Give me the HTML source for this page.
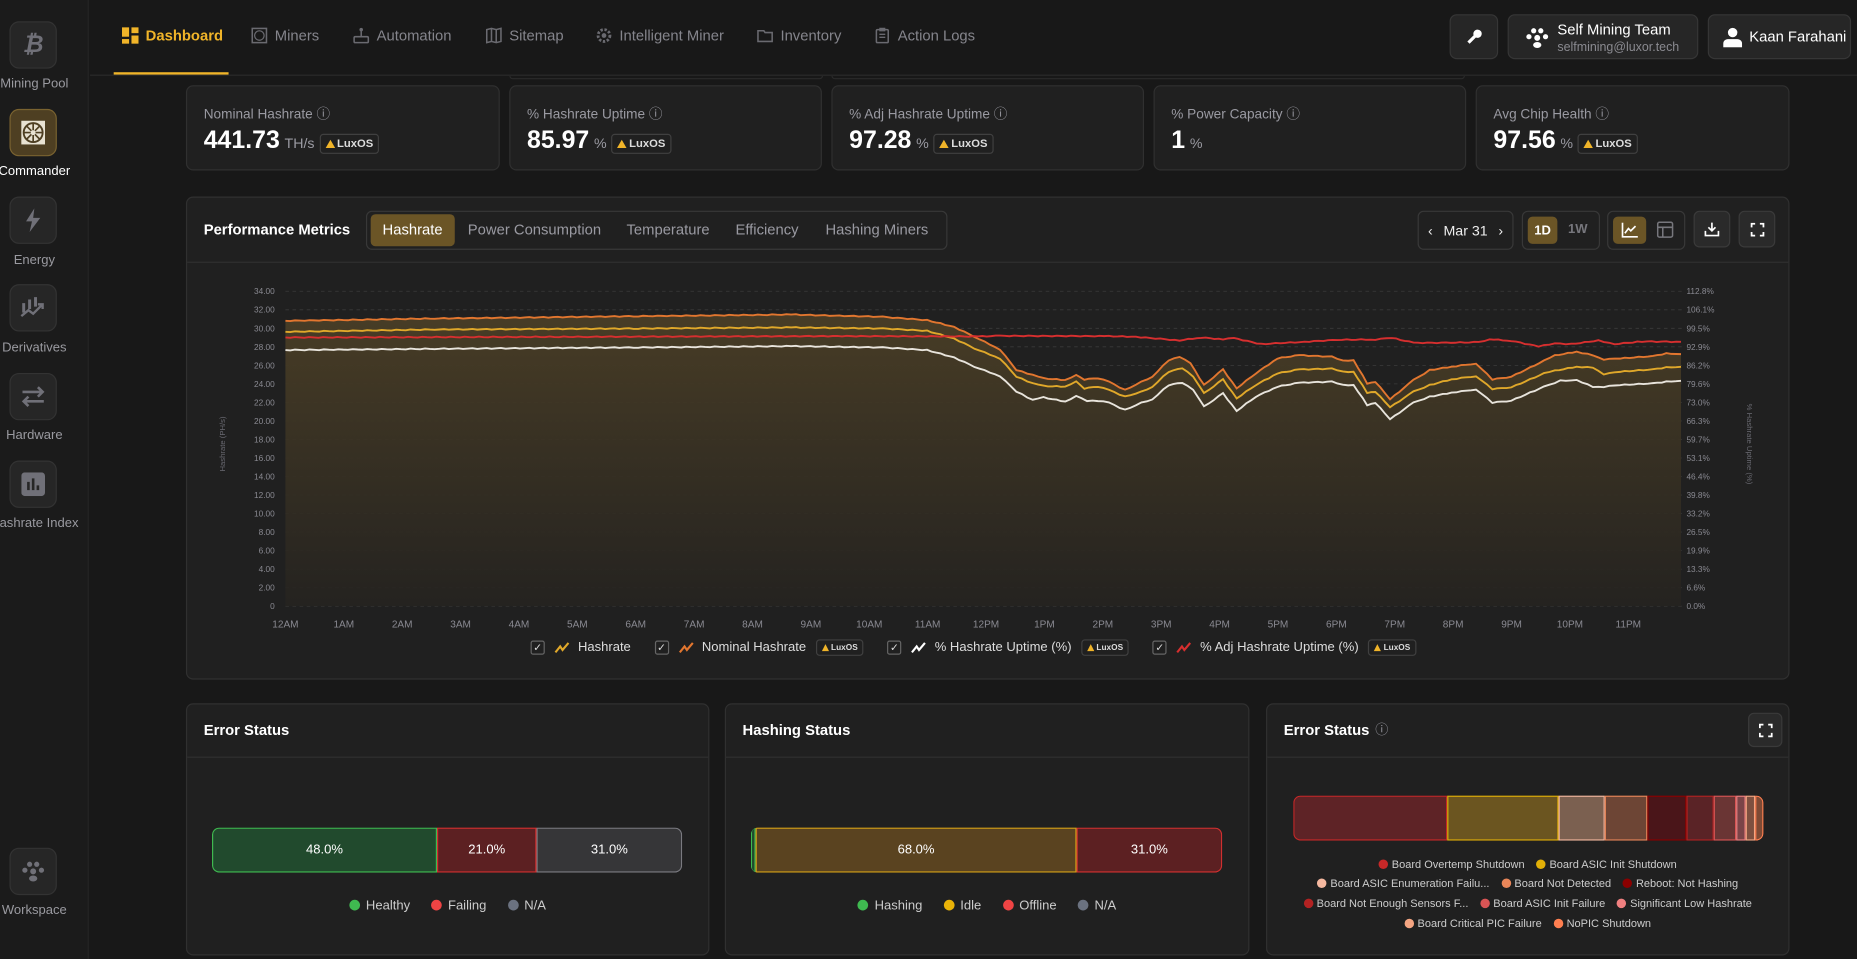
<!DOCTYPE html>
<html><head><meta charset="utf-8">
<style>
*{box-sizing:border-box;margin:0;padding:0}
html,body{width:1857px;height:959px;overflow:hidden;background:#181818;font-family:"Liberation Sans",sans-serif;color:#fff}
#root{width:1568px;height:810px;transform:scale(1.18431,1.18395);transform-origin:0 0;position:relative;background:#181818}
.abs{position:absolute}
.side{left:0;top:0;width:75px;height:810px;background:#1b1b1b;border-right:1px solid #252525}
.sbox{position:absolute;left:8px;width:40px;height:40px;border-radius:8px;background:#262626;border:1px solid #333;display:flex;align-items:center;justify-content:center}
.slabel{position:absolute;width:90px;left:-16px;text-align:center;font-size:11px;color:#9a9aa0}
.top{left:76px;top:0;width:1492px;height:64px;border-bottom:1px solid #2a2a2a}
.nav{position:absolute;top:23px;font-size:12.5px;color:#85858c;display:flex;align-items:center;gap:6px}
.btn{position:absolute;background:#262626;border:1px solid #363636;border-radius:6px}
.card{position:absolute;background:#202020;border:1px solid #303030;border-radius:6px}
.kt{position:absolute;left:14px;top:15px;font-size:11.5px;color:#9a9aa2}
.kv{position:absolute;left:14px;top:34px;font-size:21px;font-weight:bold;color:#fff;display:flex;align-items:baseline;gap:4px}
.kv small{font-size:12px;font-weight:normal;color:#9a9aa2}
.lux{display:inline-flex;align-items:center;gap:2px;border:1px solid #404040;border-radius:3px;padding:1px 4px;font-size:9.5px;font-weight:bold;color:#ddd;height:17px;vertical-align:middle}
.lux i{display:inline-block;width:0;height:0;border-left:4px solid transparent;border-right:4px solid transparent;border-bottom:7px solid #f0b429}
.ct{position:absolute;left:14px;top:15px;font-size:12.5px;font-weight:bold;color:#fff;line-height:15px}
.hdr{position:absolute;left:0;right:0;top:44px;border-top:1px solid #303030}
.dot{display:inline-block;width:9px;height:9px;border-radius:50%;margin-right:5px;vertical-align:-1px}
.leg{position:absolute;font-size:11px;color:#ccc;display:flex;gap:18px;justify-content:center}
.seg{height:100%;display:flex;align-items:center;justify-content:center;font-size:11px;color:#fff}
.bar{position:absolute;display:flex;border-radius:6px;overflow:hidden}
.el{font-size:9.3px;color:#ccc;display:flex;gap:10px;justify-content:center;position:absolute;left:0;right:0}
.el .dot{width:8px;height:8px;margin-right:3px}
</style></head><body><div id="root">

<div class="abs side">
  <div class="sbox" style="top:18px"><span style="font-size:20px;font-weight:bold;color:#707078;font-style:italic">₿</span></div>
  <div class="slabel" style="top:65px">Mining Pool</div>
  <div class="sbox" style="top:92px;background:#4e3f22;border-color:#7a6330"><svg width="24" height="24" viewBox="0 0 24 24"><rect x="2" y="2" width="20" height="20" fill="#e8e2d2"/><circle cx="12" cy="12" r="8" fill="none" stroke="#4e3f22" stroke-width="1.6"/><path d="M12 4v6M12 14v6M4 12h6M14 12h6M6.5 6.5l4 4M13.5 13.5l4 4M17.5 6.5l-4 4M10.5 13.5l-4 4" stroke="#4e3f22" stroke-width="1.4"/></svg></div>
  <div class="slabel" style="top:139px;color:#fff">Commander</div>
  <div class="sbox" style="top:166px"><svg width="16" height="20" viewBox="0 0 16 20"><path d="M9 0L2 11h5l-2 9 9-12H8z" fill="#707078"/></svg></div>
  <div class="slabel" style="top:214px">Energy</div>
  <div class="sbox" style="top:240px"><svg width="22" height="20" viewBox="0 0 22 20"><path d="M3 6v8M8 3v8M13 1v8" stroke="#707078" stroke-width="2.5"/><path d="M1 17l6-5 4 3 7-7" stroke="#707078" stroke-width="2" fill="none"/><path d="M15 7h4v4" stroke="#707078" stroke-width="2" fill="none"/></svg></div>
  <div class="slabel" style="top:288px">Derivatives</div>
  <div class="sbox" style="top:315px"><svg width="22" height="18" viewBox="0 0 22 18"><path d="M2 5h17M15 1l4 4-4 4M20 13H3M7 9l-4 4 4 4" stroke="#707078" stroke-width="2.2" fill="none"/></svg></div>
  <div class="slabel" style="top:362px">Hardware</div>
  <div class="sbox" style="top:389px"><svg width="20" height="20" viewBox="0 0 20 20"><rect width="20" height="20" rx="3" fill="#707078"/><path d="M6 8v7M10 5v10M14 11v4" stroke="#262626" stroke-width="2.2"/></svg></div>
  <div class="slabel" style="top:436px">Hashrate Index</div>
  <div class="sbox" style="top:716px"><svg width="20" height="18" viewBox="0 0 20 18"><circle cx="7" cy="3" r="2.2" fill="#707078"/><circle cx="13" cy="3" r="2.2" fill="#707078"/><circle cx="3" cy="8" r="2.2" fill="#707078"/><circle cx="17" cy="8" r="2.2" fill="#707078"/><circle cx="10" cy="9" r="2.5" fill="#707078"/><ellipse cx="10" cy="15" rx="3.5" ry="2.5" fill="#707078"/></svg></div>
  <div class="slabel" style="top:763px">Workspace</div>
</div>

<div class="abs top"></div>
<div class="nav" style="left:103px;color:#f0b429;font-weight:bold"><svg width="14" height="14" viewBox="0 0 14 14"><rect x="0" y="0" width="6" height="8" fill="#f0b429"/><rect x="8" y="0" width="6" height="5" fill="#f0b429"/><rect x="0" y="10" width="6" height="4" fill="#f0b429"/><rect x="8" y="7" width="6" height="7" fill="#f0b429"/></svg>Dashboard</div>
<div class="abs" style="left:96px;top:61px;width:97px;height:2px;background:#f0b429"></div>
<div class="nav" style="left:212px"><svg width="14" height="14" viewBox="0 0 14 14"><rect x="1" y="1" width="12" height="12" fill="none" stroke="#6a6a70" stroke-width="1.3"/><circle cx="7" cy="7" r="4" fill="none" stroke="#6a6a70"/></svg>Miners</div>
<div class="nav" style="left:298px"><svg width="14" height="14" viewBox="0 0 14 14"><rect x="1" y="8" width="12" height="5" rx="1" fill="none" stroke="#6a6a70" stroke-width="1.3"/><path d="M7 8V2" stroke="#6a6a70" stroke-width="1.3"/><circle cx="7" cy="2" r="1.5" fill="#6a6a70"/></svg>Automation</div>
<div class="nav" style="left:410px"><svg width="14" height="14" viewBox="0 0 14 14"><path d="M1 2l4-1 4 1 4-1v11l-4 1-4-1-4 1z M5 1v11M9 2v11" fill="none" stroke="#6a6a70" stroke-width="1.3"/></svg>Sitemap</div>
<div class="nav" style="left:503px"><svg width="14" height="14" viewBox="0 0 14 14"><circle cx="7" cy="7" r="5" fill="none" stroke="#6a6a70" stroke-width="2.4" stroke-dasharray="2 1.4"/><circle cx="7" cy="7" r="2" fill="#6a6a70"/></svg>Intelligent Miner</div>
<div class="nav" style="left:639px"><svg width="14" height="14" viewBox="0 0 14 14"><path d="M1 3h5l1 1.5h6V12H1z" fill="none" stroke="#6a6a70" stroke-width="1.3"/></svg>Inventory</div>
<div class="nav" style="left:738px"><svg width="14" height="14" viewBox="0 0 14 14"><rect x="2" y="2" width="10" height="11" rx="1" fill="none" stroke="#6a6a70" stroke-width="1.3"/><path d="M5 1h4v2H5zM4.5 6h5M4.5 8.5h5" stroke="#6a6a70" stroke-width="1.1" fill="none"/></svg>Action Logs</div>

<div class="btn" style="left:1224px;top:12px;width:41px;height:38px;display:flex;align-items:center;justify-content:center"><svg width="14" height="14" viewBox="0 0 14 14"><path d="M9.5 1a3.5 3.5 0 0 0-3.2 4.8L1 11.1 2.9 13l5.3-5.3A3.5 3.5 0 1 0 9.5 1z" fill="#fff"/></svg></div>
<div class="btn" style="left:1273px;top:12px;width:161px;height:38px">
  <svg class="abs" style="left:14px;top:10px" width="20" height="18" viewBox="0 0 20 18"><circle cx="7" cy="3" r="2.2" fill="#fff"/><circle cx="13" cy="3" r="2.2" fill="#fff"/><circle cx="3" cy="8" r="2.2" fill="#fff"/><circle cx="17" cy="8" r="2.2" fill="#fff"/><circle cx="10" cy="9" r="2.5" fill="#fff"/><ellipse cx="10" cy="15" rx="3.5" ry="2.5" fill="#fff"/></svg>
  <div class="abs" style="left:41px;top:5px;font-size:12.5px;color:#fff">Self Mining Team</div>
  <div class="abs" style="left:41px;top:21px;font-size:10.5px;color:#8a8a90">selfmining@luxor.tech</div>
</div>
<div class="btn" style="left:1442px;top:12px;width:121px;height:38px">
  <svg class="abs" style="left:12px;top:10px" width="16" height="17" viewBox="0 0 16 17"><circle cx="8" cy="4.5" r="4" fill="#fff"/><path d="M0 17v-3c0-2.5 2-4 4-4h8c2 0 4 1.5 4 4v3z" fill="#fff"/></svg>
  <div class="abs" style="left:34px;top:11px;font-size:12.5px;color:#fff">Kaan Farahani</div>
</div>

<div class="abs" style="left:430px;top:64px;width:265px;height:3px;border:1px solid #2a2a2a;border-top:none;border-radius:0 0 4px 4px"></div>
<div class="abs" style="left:702px;top:64px;width:535px;height:3px;border:1px solid #2a2a2a;border-top:none;border-radius:0 0 4px 4px"></div>
<div class="card" style="left:157px;top:72px;width:265px;height:72px"><div class="kt">Nominal Hashrate ⓘ</div><div class="kv">441.73 <small>TH/s</small> <span class="lux"><i></i>LuxOS</span></div></div>
<div class="card" style="left:430px;top:72px;width:264px;height:72px"><div class="kt">% Hashrate Uptime ⓘ</div><div class="kv">85.97 <small>%</small> <span class="lux"><i></i>LuxOS</span></div></div>
<div class="card" style="left:702px;top:72px;width:264px;height:72px"><div class="kt">% Adj Hashrate Uptime ⓘ</div><div class="kv">97.28 <small>%</small> <span class="lux"><i></i>LuxOS</span></div></div>
<div class="card" style="left:974px;top:72px;width:264px;height:72px"><div class="kt">% Power Capacity ⓘ</div><div class="kv">1 <small>%</small></div></div>
<div class="card" style="left:1246px;top:72px;width:265px;height:72px"><div class="kt">Avg Chip Health ⓘ</div><div class="kv">97.56 <small>%</small> <span class="lux"><i></i>LuxOS</span></div></div>

<div class="card" style="left:157px;top:166px;width:1354px;height:408px">
  <div class="abs" style="left:14px;top:20px;font-size:12.5px;font-weight:bold">Performance Metrics</div>
  <div class="abs" style="left:151px;top:11px;width:491px;height:33px;border:1px solid #383838;border-radius:5px"></div>
  <div class="abs" style="left:155px;top:14px;width:71px;height:27px;background:#6b5526;border-radius:4px"></div>
  <div class="abs" style="left:165px;top:20px;font-size:12.5px;color:#fff">Hashrate</div>
  <div class="abs" style="left:237px;top:20px;font-size:12.5px;color:#9a9aa2">Power Consumption</div>
  <div class="abs" style="left:371px;top:20px;font-size:12.5px;color:#9a9aa2">Temperature</div>
  <div class="abs" style="left:463px;top:20px;font-size:12.5px;color:#9a9aa2">Efficiency</div>
  <div class="abs" style="left:539px;top:20px;font-size:12.5px;color:#9a9aa2">Hashing Miners</div>
  <div class="abs" style="left:0;right:0;top:54px;border-top:1px solid #303030"></div>

  <div class="abs" style="left:1039px;top:11px;width:81px;height:33px;border:1px solid #383838;border-radius:5px;font-size:12px;color:#eee;display:flex;align-items:center;justify-content:center;gap:9px"><span>‹</span>Mar 31<span>›</span></div>
  <div class="abs" style="left:1127px;top:11px;width:66px;height:33px;border:1px solid #383838;border-radius:5px"></div>
  <div class="abs" style="left:1132px;top:16px;width:25px;height:23px;background:#6b5526;border-radius:4px;font-size:11px;font-weight:bold;display:flex;align-items:center;justify-content:center">1D</div>
  <div class="abs" style="left:1166px;top:21px;font-size:11px;font-weight:bold;color:#77777d">1W</div>
  <div class="abs" style="left:1199px;top:11px;width:66px;height:33px;border:1px solid #383838;border-radius:5px"></div>
  <div class="abs" style="left:1204px;top:16px;width:28px;height:23px;background:#6b5526;border-radius:4px;display:flex;align-items:center;justify-content:center"><svg width="14" height="13" viewBox="0 0 14 13"><path d="M1 0v12h13M3 9l3-4 2 2 4-4" fill="none" stroke="#fff" stroke-width="1.4"/></svg></div>
  <svg class="abs" style="left:1241px;top:20px" width="14" height="14" viewBox="0 0 14 14"><rect x="0.7" y="0.7" width="12.6" height="12.6" rx="1.5" fill="none" stroke="#77777d" stroke-width="1.3"/><path d="M0.7 5h12.6M5 5v8.3" stroke="#77777d" stroke-width="1.3"/></svg>
  <div class="abs" style="left:1272px;top:11px;width:31px;height:31px;background:#2a2a2a;border:1px solid #3a3a3a;border-radius:5px;display:flex;align-items:center;justify-content:center"><svg width="13" height="13" viewBox="0 0 13 13"><path d="M6.5 1v7M3.5 5l3 3 3-3M1 8v4h11V8" fill="none" stroke="#fff" stroke-width="1.4"/></svg></div>
  <div class="abs" style="left:1310px;top:11px;width:31px;height:31px;background:#2a2a2a;border:1px solid #3a3a3a;border-radius:5px;display:flex;align-items:center;justify-content:center"><svg width="12" height="12" viewBox="0 0 12 12"><path d="M1 4V1h3M8 1h3v3M11 8v3H8M4 11H1V8" fill="none" stroke="#fff" stroke-width="1.5"/></svg></div>
</div>

<svg id="chart" class="abs" style="left:0;top:0" width="1568" height="810" viewBox="0 0 1568 810">
  <defs><linearGradient id="fg" x1="0" y1="0" x2="0" y2="1"><stop offset="0" stop-color="#4a3e26" stop-opacity="0.95"/><stop offset="1" stop-color="#252320" stop-opacity="0.9"/></linearGradient></defs>
  <g id="grid"></g>
  <path id="area" fill="url(#fg)"/>
  <path id="lw" fill="none" stroke="#e8e4dc" stroke-width="1.6"/>
  <path id="ly" fill="none" stroke="#e0a82a" stroke-width="1.6"/>
  <path id="lo" fill="none" stroke="#e2762f" stroke-width="1.6"/>
  <path id="lr" fill="none" stroke="#d72f2f" stroke-width="1.6"/>
  <g id="labels" font-family="Liberation Sans, sans-serif"></g>
  <text x="190" y="375" font-size="6.5" fill="#6a6a72" text-anchor="middle" transform="rotate(-90 190 375)">Hashrate (PH/s)</text>
  <text x="1475" y="375" font-size="6.5" fill="#6a6a72" text-anchor="middle" transform="rotate(90 1475 375)">% Hashrate Uptime (%)</text>
</svg>

<div class="abs" style="top:540px;left:448px;font-size:11px;color:#ddd;display:flex;align-items:center;white-space:nowrap">
  <span style="display:inline-block;width:12px;height:12px;border:1px solid #666;border-radius:2px;font-size:9px;line-height:10px;text-align:center">✓</span>
  <svg width="14" height="10" style="margin:0 6px 0 8px"><path d="M1 9l4-5 2 3 5-6" stroke="#e0a82a" stroke-width="1.8" fill="none"/></svg>Hashrate
  <span style="display:inline-block;margin-left:20px;width:12px;height:12px;border:1px solid #666;border-radius:2px;font-size:9px;line-height:10px;text-align:center">✓</span>
  <svg width="14" height="10" style="margin:0 6px 0 8px"><path d="M1 9l4-5 2 3 5-6" stroke="#e2762f" stroke-width="1.8" fill="none"/></svg>Nominal Hashrate<span class="lux" style="margin-left:8px;font-size:7px;height:14px"><i style="border-bottom-width:6px;border-left-width:3px;border-right-width:3px"></i>LuxOS</span>
  <span style="display:inline-block;margin-left:20px;width:12px;height:12px;border:1px solid #666;border-radius:2px;font-size:9px;line-height:10px;text-align:center">✓</span>
  <svg width="14" height="10" style="margin:0 6px 0 8px"><path d="M1 9l4-5 2 3 5-6" stroke="#fff" stroke-width="1.8" fill="none"/></svg>% Hashrate Uptime (%)<span class="lux" style="margin-left:8px;font-size:7px;height:14px"><i style="border-bottom-width:6px;border-left-width:3px;border-right-width:3px"></i>LuxOS</span>
  <span style="display:inline-block;margin-left:20px;width:12px;height:12px;border:1px solid #666;border-radius:2px;font-size:9px;line-height:10px;text-align:center">✓</span>
  <svg width="14" height="10" style="margin:0 6px 0 8px"><path d="M1 9l4-5 2 3 5-6" stroke="#d72f2f" stroke-width="1.8" fill="none"/></svg>% Adj Hashrate Uptime (%)<span class="lux" style="margin-left:8px;font-size:7px;height:14px"><i style="border-bottom-width:6px;border-left-width:3px;border-right-width:3px"></i>LuxOS</span>
</div>

<div class="card" style="left:157px;top:594px;width:442px;height:213px">
  <div class="ct">Error Status</div><div class="hdr"></div>
  <div class="bar" style="left:21px;top:104px;width:397px;height:38px">
    <div class="seg" style="width:190px;background:#214a2d;border:1px solid #3fb950;border-radius:6px 0 0 6px">48.0%</div>
    <div class="seg" style="width:84px;background:#5c2022;border:1px solid #d23030">21.0%</div>
    <div class="seg" style="width:123px;background:#363638;border:1px solid #7a7a80;border-radius:0 6px 6px 0">31.0%</div>
  </div>
  <div class="leg" style="left:0;right:0;top:164px"><span><i class="dot" style="background:#3fb950"></i>Healthy</span><span><i class="dot" style="background:#ef4444"></i>Failing</span><span><i class="dot" style="background:#6b7280"></i>N/A</span></div>
</div>
<div class="card" style="left:612px;top:594px;width:443px;height:213px">
  <div class="ct">Hashing Status</div><div class="hdr"></div>
  <div class="bar" style="left:21px;top:104px;width:398px;height:38px">
    <div class="seg" style="width:4px;background:#214a2d;border:1px solid #3fb950;border-radius:6px 0 0 6px"></div>
    <div class="seg" style="width:271px;background:#5a4320;border:1px solid #d4a017">68.0%</div>
    <div class="seg" style="width:123px;background:#5c2022;border:1px solid #d23030;border-radius:0 6px 6px 0">31.0%</div>
  </div>
  <div class="leg" style="left:0;right:0;top:164px"><span><i class="dot" style="background:#3fb950"></i>Hashing</span><span><i class="dot" style="background:#eab308"></i>Idle</span><span><i class="dot" style="background:#ef4444"></i>Offline</span><span><i class="dot" style="background:#6b7280"></i>N/A</span></div>
</div>
<div class="card" style="left:1069px;top:594px;width:442px;height:213px">
  <div class="ct" style="display:flex;align-items:center;gap:5px">Error Status <span style="font-weight:normal;color:#9a9aa2;font-size:11px;line-height:11px">ⓘ</span></div><div class="hdr"></div>
  <div class="abs" style="left:406px;top:7px;width:29px;height:29px;background:#2a2a2a;border:1px solid #3a3a3a;border-radius:5px;display:flex;align-items:center;justify-content:center"><svg width="12" height="12" viewBox="0 0 12 12"><path d="M1 4V1h3M8 1h3v3M11 8v3H8M4 11H1V8" fill="none" stroke="#fff" stroke-width="1.5"/></svg></div>
  <div class="bar" style="left:22px;top:77px;width:397px;height:38px">
    <div class="seg" style="width:129.5px;background:#5e2326;border:1px solid #c62828;border-radius:6px 0 0 6px"></div>
    <div class="seg" style="width:94.8px;background:#6b5520;border:1px solid #e2b007"></div>
    <div class="seg" style="width:38.6px;background:#7b6050;border:1px solid #f5b8a0"></div>
    <div class="seg" style="width:36px;background:#6d4535;border:1px solid #e98659"></div>
    <div class="seg" style="width:33.4px;background:#4a1519;border:1px solid #8b0000"></div>
    <div class="seg" style="width:22.5px;background:#5a2326;border:1px solid #b22222"></div>
    <div class="seg" style="width:19.3px;background:#6a3534;border:1px solid #d95555"></div>
    <div class="seg" style="width:7.7px;background:#7a4448;border:1px solid #f08080"></div>
    <div class="seg" style="width:8.4px;background:#7d5040;border:1px solid #f4a582"></div>
    <div class="seg" style="width:6.8px;background:#7d4a35;border:1px solid #ff7f50;border-radius:0 6px 6px 0"></div>
  </div>
  <div class="el" style="top:130px"><span><i class="dot" style="background:#c62828"></i>Board Overtemp Shutdown</span><span><i class="dot" style="background:#e2b007"></i>Board ASIC Init Shutdown</span></div>
  <div class="el" style="top:146px"><span><i class="dot" style="background:#f5b8a0"></i>Board ASIC Enumeration Failu...</span><span><i class="dot" style="background:#e98659"></i>Board Not Detected</span><span><i class="dot" style="background:#8b0000"></i>Reboot: Not Hashing</span></div>
  <div class="el" style="top:163px"><span><i class="dot" style="background:#b22222"></i>Board Not Enough Sensors F...</span><span><i class="dot" style="background:#d95555"></i>Board ASIC Init Failure</span><span><i class="dot" style="background:#f08080"></i>Significant Low Hashrate</span></div>
  <div class="el" style="top:180px"><span><i class="dot" style="background:#f4a582"></i>Board Critical PIC Failure</span><span><i class="dot" style="background:#ff7f50"></i>NoPIC Shutdown</span></div>
</div>

</div>
<script>
(function(){
var NS="http://www.w3.org/2000/svg";
var X0=241,X1=1420,Y0=512,Ytop=246;
var grid=document.getElementById('grid'),lab=document.getElementById('labels');
var lv=["0","2.00","4.00","6.00","8.00","10.00","12.00","14.00","16.00","18.00","20.00","22.00","24.00","26.00","28.00","30.00","32.00","34.00"];
var rv=["0.0%","6.6%","13.3%","19.9%","26.5%","33.2%","39.8%","46.4%","53.1%","59.7%","66.3%","73.0%","79.6%","86.2%","92.9%","99.5%","106.1%","112.8%"];
for(var i=0;i<18;i++){var y=Y0-i*(Y0-Ytop)/17;
 var l=document.createElementNS(NS,'line');l.setAttribute('x1',X0);l.setAttribute('x2',X1);l.setAttribute('y1',y);l.setAttribute('y2',y);l.setAttribute('stroke','#3a3a3a');l.setAttribute('stroke-width','0.7');l.setAttribute('stroke-dasharray','3 3');grid.appendChild(l);
 var t=document.createElementNS(NS,'text');t.setAttribute('x',232);t.setAttribute('y',y+2.5);t.setAttribute('font-size','7');t.setAttribute('fill','#8a8a92');t.setAttribute('text-anchor','end');t.textContent=lv[i];lab.appendChild(t);
 t=document.createElementNS(NS,'text');t.setAttribute('x',1424);t.setAttribute('y',y+2.5);t.setAttribute('font-size','7');t.setAttribute('fill','#8a8a92');t.textContent=rv[i];lab.appendChild(t);}
var hrs=["12AM","1AM","2AM","3AM","4AM","5AM","6AM","7AM","8AM","9AM","10AM","11AM","12PM","1PM","2PM","3PM","4PM","5PM","6PM","7PM","8PM","9PM","10PM","11PM"];
for(var h=0;h<24;h++){var t=document.createElementNS(NS,'text');t.setAttribute('x',X0+h*49.3);t.setAttribute('y',530);t.setAttribute('font-size','8.5');t.setAttribute('fill','#8a8a92');t.setAttribute('text-anchor','middle');t.textContent=hrs[h];lab.appendChild(t);}
function A(p){return [152+0.430*p[0],228.3+0.2809*p[1]]}
function B(p){return [844.4+0.4593*p[0],228.3+0.2809*p[1]]}
function build(left,right){var pts=[];left.forEach(function(p){pts.push(A(p))});right.forEach(function(p){pts.push(B(p))});
 var out=[];for(var i=0;i<pts.length-1;i++){var a=pts[i],b=pts[i+1];var n=Math.max(1,Math.round((b[0]-a[0])/4));for(var k=0;k<n;k++){var f=k/n;out.push([a[0]+(b[0]-a[0])*f,a[1]+(b[1]-a[1])*f+(Math.sin(i*7.3+k*2.1)*0.35)]);}}
 out.push(pts[pts.length-1]);return out;}
function d(o){return 'M'+o.map(function(p){return p[0].toFixed(1)+','+p[1].toFixed(1)}).join('L')}
var red=build([[207,202],[800,200],[1300,198],[1567,199]],[[0,197],[200,198],[250,200],[330,211],[370,202],[410,208],[430,204],[480,222],[560,215],[620,209],[690,208],[720,203],[760,218],[820,218],[880,216],[900,207],[940,212],[990,229],[1020,220],[1050,222],[1100,211],[1130,222],[1180,214],[1252,215]]);
var org=build([[207,152],[500,145],[900,138],[1200,133],[1380,140],[1467,150],[1520,170],[1560,200]],[[0,238],[30,300],[60,315],[80,325],[120,330],[140,314],[155,328],[180,325],[200,335],[230,360],[260,335],[280,320],[310,270],[330,260],[350,280],[375,345],[410,298],[435,355],[470,310],[510,265],[550,255],[610,260],[630,272],[650,270],[675,340],[690,335],[717,388],[760,330],[790,300],[830,290],[875,280],[905,328],[940,320],[1000,272],[1020,256],[1060,245],[1090,255],[1110,268],[1140,265],[1200,258],[1225,250],[1252,252]]);
var yel=build([[207,185],[500,178],[900,175],[1200,172],[1380,175],[1467,182],[1520,205],[1560,235]],[[0,265],[30,320],[60,340],[80,348],[120,350],[140,333],[155,355],[180,350],[200,360],[230,380],[260,365],[280,350],[310,305],[335,294],[355,320],[375,370],[410,328],[435,385],[470,345],[510,310],[550,298],[610,296],[630,305],[650,305],[675,368],[690,365],[717,412],[760,365],[790,345],[830,328],[875,318],[905,357],[940,352],[1000,310],[1020,302],[1060,290],[1090,292],[1110,312],[1140,305],[1200,298],[1225,292],[1252,290]]);
var wht=build([[207,240],[500,236],[900,232],[1200,228],[1380,232],[1467,240],[1520,262],[1560,290]],[[0,318],[30,365],[60,390],[80,382],[120,395],[140,377],[160,392],[180,393],[200,398],[230,420],[260,398],[280,388],[310,345],[335,338],[355,360],[375,410],[410,370],[435,423],[470,380],[510,350],[550,338],[610,335],[630,345],[650,345],[675,405],[690,398],[717,448],[760,398],[790,380],[830,368],[875,358],[905,398],[940,392],[1000,350],[1030,332],[1060,330],[1090,350],[1110,350],[1140,345],[1200,340],[1225,335],[1252,332]]);
document.getElementById('lr').setAttribute('d',d(red));
document.getElementById('lo').setAttribute('d',d(org));
document.getElementById('ly').setAttribute('d',d(yel));
document.getElementById('lw').setAttribute('d',d(wht));
var last=org[org.length-1];
document.getElementById('area').setAttribute('d',d(org)+'L'+last[0].toFixed(1)+','+Y0+'L'+org[0][0].toFixed(1)+','+Y0+'Z');
})();
</script>
</body></html>
